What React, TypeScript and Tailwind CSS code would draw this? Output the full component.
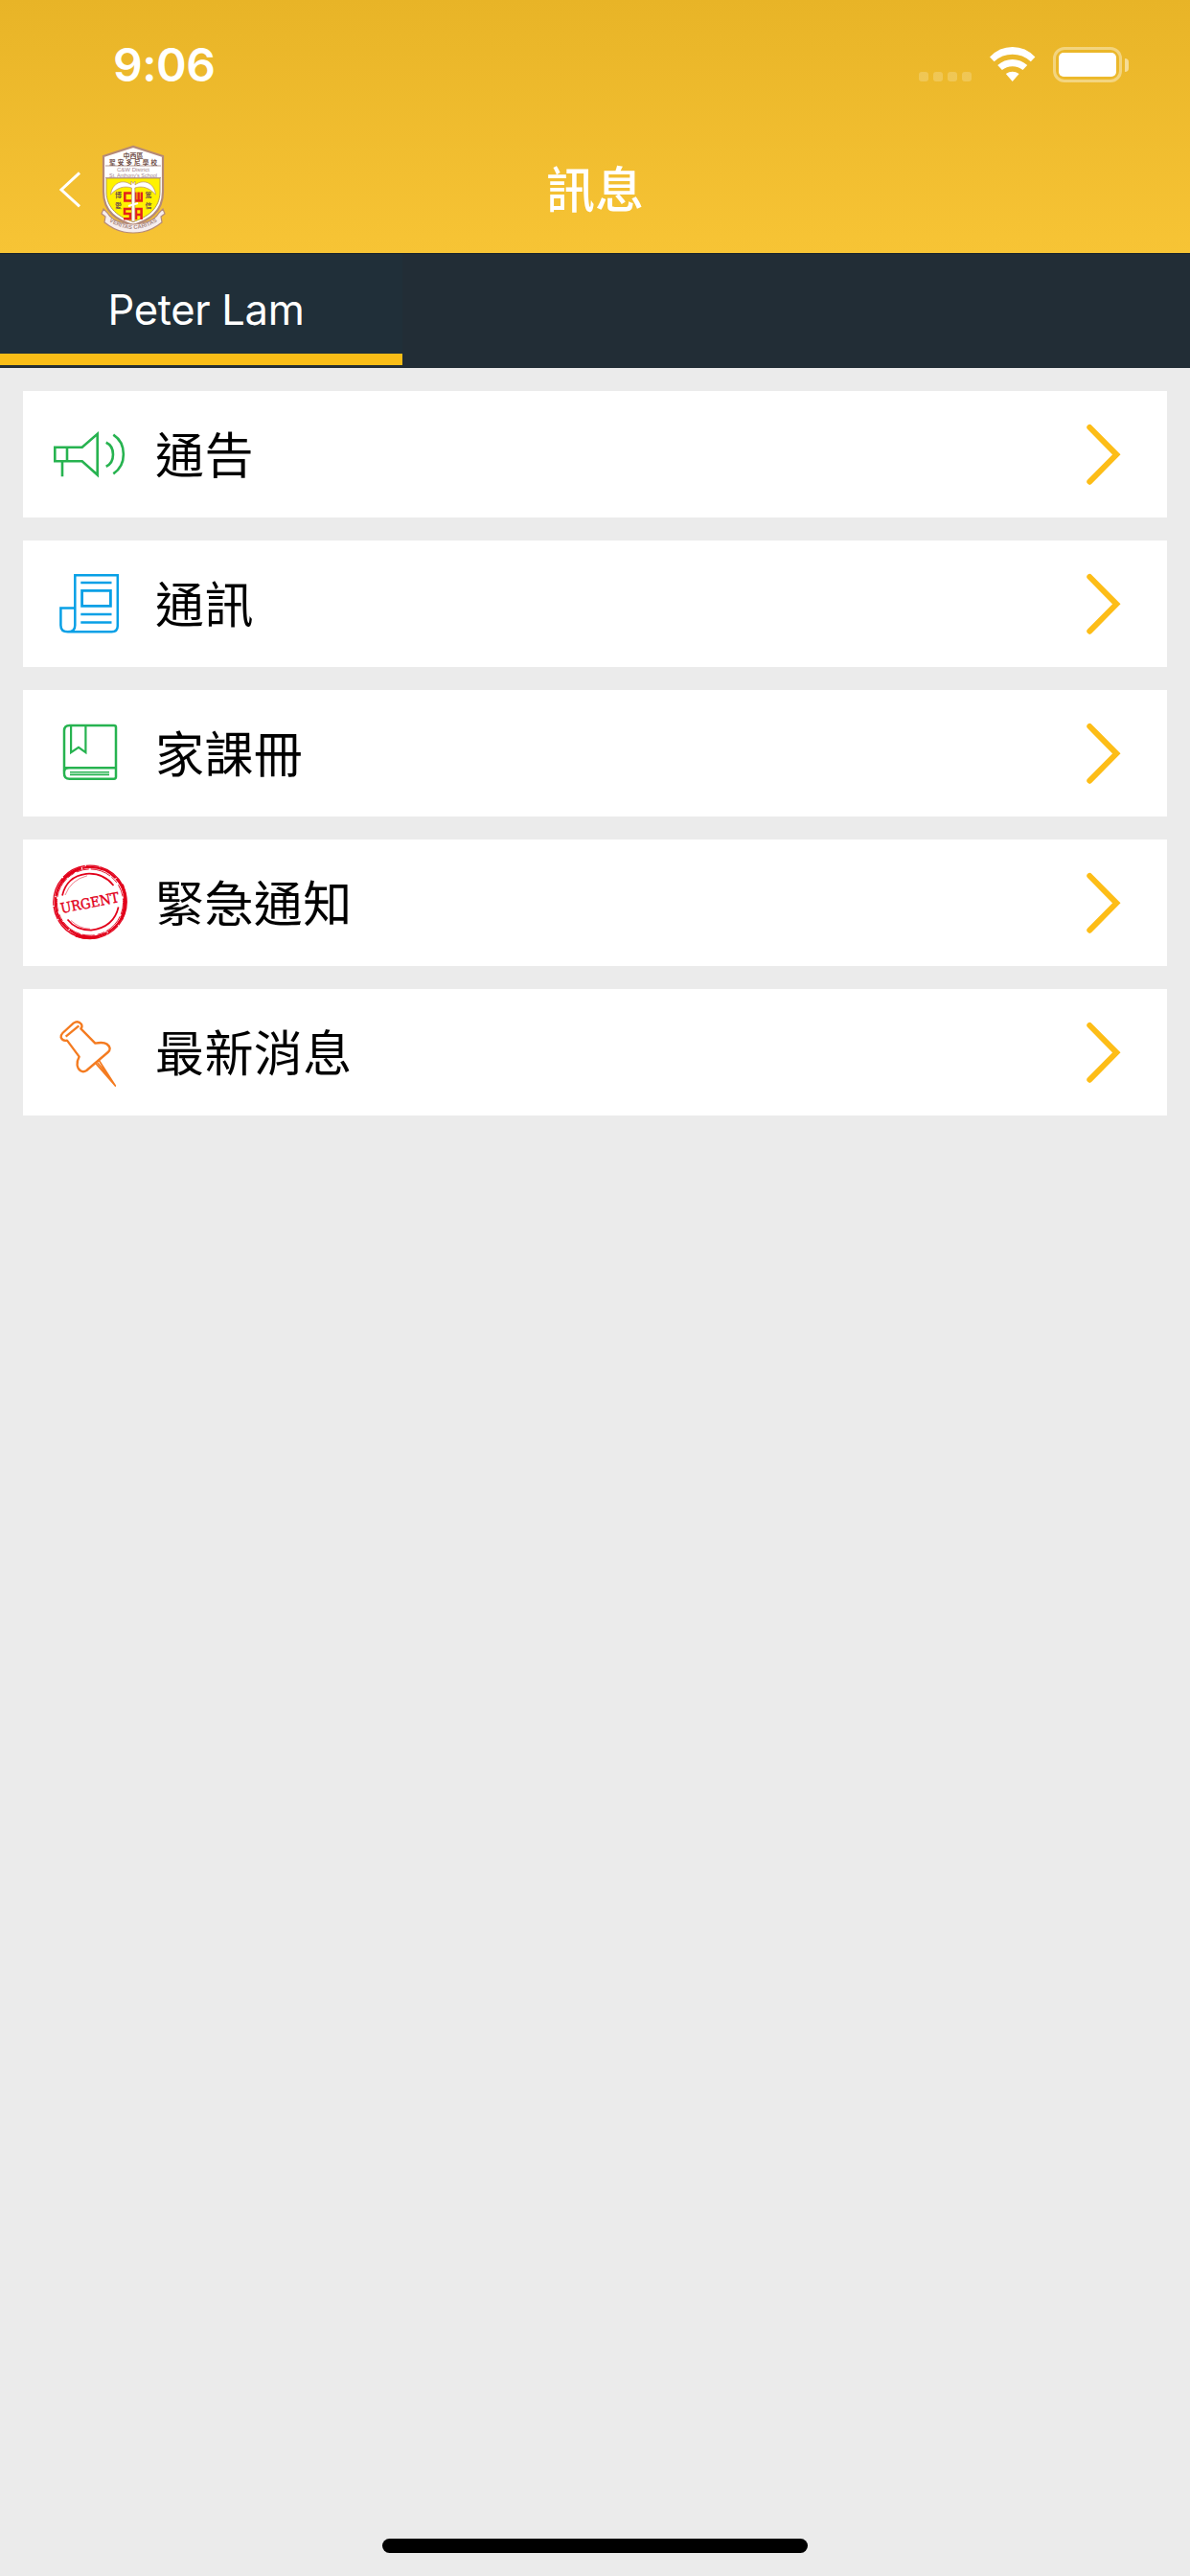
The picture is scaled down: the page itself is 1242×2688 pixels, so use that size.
import React from 'react';

const MegaphoneIcon = () => (
  <svg viewBox="0 0 84 84" className="w-[84px] h-[84px]" fill="none" stroke="#27b350" strokeWidth="2.6">
    <path d="M5.3 34.7H33.7L49.7 20.8V63.5L33.7 49.3H5.3Z" />
    <path d="M18 34.7V49.3M13 49.3V65.3" />
    <path d="M58.7 29.7C68.4 34 68.4 50.4 58.7 54.7" />
    <path d="M66.3 21.7C80.4 31 80.4 53 66.3 62.3" />
  </svg>
);

const NewsletterIcon = () => (
  <svg viewBox="0 0 84 84" className="w-[84px] h-[84px]" fill="none" stroke="#08a0e6" strokeWidth="2.5">
    <path d="M19 71.3H64.5Q70.8 71.3 70.8 65V12.3H26.3V64.5Q26.3 71.3 18.8 71.3Q11.4 71.3 11.4 64.5V46.5H26.3" />
    <path d="M32.3 20H64.5M32.3 53H64.5M32.3 61.4H64.5" />
    <path d="M33.6 28.4H63.4V44.3H33.6Z" strokeWidth="2.8" />
  </svg>
);

const BookIcon = () => (
  <svg viewBox="0 0 84 84" className="w-[84px] h-[84px]" fill="none" stroke="#27b350" strokeWidth="2.5">
    <path d="M20.5 13H67Q69 13 69 15V66.5Q69 68.7 67 68.7H20.5Q15 68.7 15 63.2V18.5Q15 13 20.5 13Z" />
    <path d="M15 57.2H69M15 60.5Q15.5 57.2 20 57.2" />
    <path d="M22.1 13V41.2L30 35.8L37.4 41.2V13" strokeWidth="2.2" />
    <path d="M21 61.7H62M21 64.4H62" strokeWidth="1.6" />
  </svg>
);

const UrgentIcon = () => (
  <svg viewBox="0 0 84 84" className="w-[84px] h-[84px]" fill="none" stroke="#e2001a">
    <circle cx="42" cy="41.3" r="38.2" strokeWidth="1.3" strokeDasharray="26 1 14 .8 31 1.4" />
    <circle cx="42.3" cy="41.3" r="36.4" strokeWidth="2.2" strokeDasharray="38 .8 17 .6 24 1" />
    <circle cx="42" cy="41.5" r="34.6" strokeWidth=".9" strokeDasharray="13 2 22 1.5 8 3" />
    <path d="M12.5 20Q19 11 32 6.2M27 76Q38 80 51 77.5M75.5 23Q82 40 75 59" strokeWidth="3" />
    <path d="M13 34.5Q17.5 14.5 38 11.8Q56 10.5 66.5 24" strokeWidth="1.7" />
    <path d="M18.5 59.5Q27 70.5 43 70.7Q67 67.5 71.6 46.5" strokeWidth="1.7" />
    <path d="M16 34Q22 18 39 13.8M22 60.5Q31 69 42 69.2" strokeWidth=".5" />
    <text
      x="41.5"
      y="47.2"
      transform="rotate(-11 41.5 41.5)"
      textAnchor="middle"
      textLength="62"
      fill="#e2001a"
      stroke="#e2001a"
      strokeWidth=".4"
      className="font-['DejaVu_Serif'] text-[14.5px]"
      lengthAdjust="spacingAndGlyphs"
    >
      URGENT
    </text>
  </svg>
);

const PinIcon = () => (
  <svg viewBox="0 0 252 252" className="w-[84px] h-[84px]" fill="none" stroke="#f47b20" strokeWidth="7" strokeLinejoin="round">
    <path d="M40 66L74 35Q88 25 99 38Q103 46 97 52L142 98C166 93 184 98 188 114Q188 121 182 126L115 183Q105 190 96 184C84 176 82 158 92 140L54 89Q40 92 35 80Q34 72 40 66Z" />
    <path d="M50 77L91 43" />
    <path d="M142 159L205 231L153 150M149 158L190 208" strokeWidth="5" />
  </svg>
);

const Crest = () => (
  <svg viewBox="0 0 70 96" className="w-[70px] h-[96px]" fill="none">
    <path d="M4 13L35 3L66 13V50C66 72 51 80 35 85C19 80 4 72 4 50Z" fill="#fff" stroke="#b58a78" strokeWidth="2.2" />
    <path d="M7 36H63V50C63 68 49 77 35 81.5C21 77 7 68 7 50Z" fill="#fff200" stroke="#b59a58" />
    <path d="M6 23H64M6 35.5H64" stroke="#b89a92" strokeWidth="1.2" />
    <g fill="#71504a" textAnchor="middle" className="font-['Noto_Sans_CJK_TC'] font-bold">
      <text x="35" y="14.5" className="text-[7px]">中西區</text>
      <text x="35" y="21.5" textLength="50" className="text-[6.5px]">聖安多尼學校</text>
      <text x="19.5" y="55.5" className="text-[7px]">博</text>
      <text x="51" y="55.5" className="text-[7px]">篤</text>
      <text x="19.5" y="67" className="text-[7px]">愛</text>
      <text x="51" y="67" className="text-[7px]">信</text>
    </g>
    <g fill="#a5858c" textAnchor="middle" className="font-['Liberation_Sans']">
      <text x="35" y="29.3" textLength="34" className="text-[6px]">C&amp;W District</text>
      <text x="35" y="34.5" textLength="50" className="text-[5.5px]">St. Anthony's School</text>
    </g>
    <path d="M33 51.5H26.3V59.5H33M37.3 50.5V59.5H43.8V50.5M40.6 50.5V59.5M33 68H26V73H32V78.2H25M38 79V68H43.6V79M38 74H43.6" stroke="#e3211c" strokeWidth="2.5" />
    <path
      d="M33 39L35 41.5L37 39V43C46 36 57 41 58.5 53C52 46 45 43.5 36.8 46V81H33.4V46C25 43.5 18 46 11.5 53C13 41 24 36 33 43Z"
      fill="#fff"
      stroke="#b98e75"
      strokeWidth=".7"
    />
    <path d="M30 65L40 62" stroke="#fff" strokeWidth="2" />
    <path d="M4 68L8 72Q12 79 22 82Q35 86 48 82Q58 79 62 72L66 68L68 73L64 76L65 82Q55 90 45 92Q35 94 25 92Q15 90 5 82L6 76L2 73Z" fill="#f7eeee" stroke="#b58a78" strokeWidth="1.2" />
    <path id="motto" d="M10 81Q35 97 60 81" />
    <text fill="#a98a84" className="font-['Liberation_Sans'] text-[6px] font-bold">
      <textPath href="#motto" startOffset="50%" textAnchor="middle">VERITAS CARITAS</textPath>
    </text>
  </svg>
);

const StatusBar = () => (
  <div className="h-[132px] pl-[118px] pr-[64px] pt-[3px] flex items-center justify-between">
    <span className="text-[48px] leading-none font-semibold tracking-[-0.5px]">9:06</span>
    <div className="flex items-center">
      <div className="flex gap-[5px] mt-[25px] mr-[19px]">
        {[0, 1, 2, 3].map((dot) => (
          <span key={dot} className="w-2.5 h-2.5 rounded-[3px] bg-white/20" />
        ))}
      </div>
      <svg viewBox="0 0 48 37" className="w-12 h-[37px] mr-[18px]" fill="#fff">
        <path d="M0 10.4Q10 0 23.7 0T47.4 10.4L42.8 15.2Q34.5 7.8 23.7 7.8T4.6 15.2Z" />
        <path d="M8.2 19Q15 13 23.7 13T39.2 19L34.5 24Q30 20.2 23.7 20.2T12.9 24Z" />
        <path d="M16.8 28Q23.7 23.4 30.6 28L23.7 36Z" />
      </svg>
      <div className="w-[72px] h-[37px] rounded-[12px] border-[3px] border-white/40 p-[3px]">
        <div className="h-full rounded-[5px] bg-white" />
      </div>
      <div className="ml-[3px] w-1 h-[14px] rounded-r-full bg-white/50" />
    </div>
  </div>
);

const NavBar = () => (
  <div className="h-[132px] grid grid-cols-3 items-center">
    <div className="flex items-center pl-[60px]">
      <svg viewBox="0 0 28 40" className="w-7 h-10 mr-4" fill="none" stroke="#fff" strokeWidth="3">
        <path d="M23 2.3L4 20L23 37.3" />
      </svg>
      <Crest />
    </div>
    <h1 className="text-center text-[51px] leading-none font-medium">訊息</h1>
  </div>
);

const MENU = [
  { label: '通告', icon: <MegaphoneIcon /> },
  { label: '通訊', icon: <NewsletterIcon /> },
  { label: '家課冊', icon: <BookIcon /> },
  { label: '緊急通知', icon: <UrgentIcon /> },
  { label: '最新消息', icon: <PinIcon /> },
];

export default function App() {
  return (
    <div className="w-[1242px] h-[2688px] flex flex-col bg-[#ebebeb] font-[Inter,'Noto_Sans_CJK_TC',sans-serif]">
      <header className="text-white bg-linear-to-b from-[#e8b427] to-[#f7c435]">
        <StatusBar />
        <NavBar />
      </header>

      <div className="h-[120px] pb-[3px] bg-[#222d36] border-t border-[#18232b]">
        <button className="block w-[420px] h-full bg-[#202f39] border-b-[12px] border-[#f9bd17] text-white text-[43.5px] leading-none font-normal tracking-[-0.3px] pt-[14px] pl-[10px]">
          Peter Lam
        </button>
      </div>

      <main className="flex-1 flex flex-col gap-6 p-6">
        {MENU.map((item) => (
          <button key={item.label} className="h-[132px] bg-white flex items-center pl-7 pr-[37px] text-left">
            {item.icon}
            <span className="ml-[26px] pt-0.5 flex-1 text-[51px] leading-none tracking-[0.4px] text-black">{item.label}</span>
            <svg viewBox="0 0 60 84" className="w-[60px] h-[84px]" fill="none" stroke="#fdbd17" strokeWidth="6">
              <path d="M16.3 14L44.3 42.3L16.3 70.7" strokeLinecap="round" />
            </svg>
          </button>
        ))}
      </main>

      <div className="h-[39px] flex justify-center">
        <div className="w-[444px] h-[15px] rounded-full bg-black" />
      </div>
    </div>
  );
}
